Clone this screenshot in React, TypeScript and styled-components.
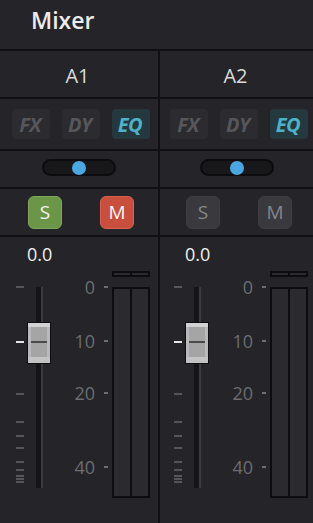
import styled, { createGlobalStyle } from "styled-components";

const GlobalStyle = createGlobalStyle`
  html, body {
    margin: 0;
    padding: 0;
    background: #242429;
  }
  body {
    font-family: "Open Sans", "Noto Sans", sans-serif;
    overflow: hidden;
  }
`;

const LINE = "#101013";

const Panel = styled.div`
  width: 313px;
  height: 523px;
  background: #242429;
  display: flex;
  flex-direction: column;
  overflow: hidden;
`;

const Header = styled.header`
  height: 49px;
  flex-shrink: 0;
  padding-left: 31px;
  border-bottom: 2px solid ${LINE};
`;

const Title = styled.h1`
  margin: 0;
  font-size: 23px;
  font-weight: 600;
  line-height: 40px;
  color: #ececec;
`;

const Channels = styled.div`
  flex: 1;
  min-height: 0;
  display: grid;
  grid-template-columns: 158px 158px;
`;

const Channel = styled.section<{ $divider?: boolean }>`
  display: flex;
  flex-direction: column;
  box-shadow: ${(p) => (p.$divider ? `inset 2px 0 0 ${LINE}` : "none")};
`;

const Row = styled.div`
  flex-shrink: 0;
  display: flex;
  align-items: center;
  border-bottom: 2px solid ${LINE};
  box-sizing: content-box;
`;

const NameRow = styled(Row)`
  height: 44px;
  padding: 2px 3px 0 0;
  justify-content: center;
  font-size: 20px;
  color: #dadada;
`;

const TabRow = styled(Row)`
  height: 50px;
  padding-left: 12px;
  gap: 12px;
`;

const Tab = styled.button<{ $active?: boolean }>`
  width: 38px;
  height: 30px;
  padding: 0 2px 0 0;
  border: none;
  border-radius: 4px;
  font-family: inherit;
  font-size: 20px;
  font-weight: 700;
  font-style: italic;
  letter-spacing: -0.5px;
  background: ${(p) => (p.$active ? "#25383e" : "#2b2b30")};
  color: ${(p) => (p.$active ? "#4db2c7" : "#56565b")};
`;

const PanRow = styled(Row)`
  height: 28px;
  padding: 8px 0 0 42px;
  align-items: flex-start;
`;

const PanTrack = styled.div`
  width: 74px;
  height: 17px;
  box-sizing: border-box;
  border: 2px solid #0c0c0e;
  border-radius: 9px;
  background: #18181b;
  display: flex;
  align-items: center;
  justify-content: center;
`;

const PanKnob = styled.div`
  width: 14px;
  height: 14px;
  border-radius: 50%;
  background: #4aa7e2;
`;

const SoloRow = styled(Row)`
  height: 46px;
  padding-left: 28px;
  gap: 38px;
`;

const StateButton = styled.button<{ $tone: "solo" | "mute" | "off" }>`
  width: 34px;
  height: 33px;
  padding: 0;
  border-radius: 6px;
  font-family: inherit;
  font-size: 19px;
  border: 1px solid
    ${(p) => (p.$tone === "solo" ? "#7ea65c" : p.$tone === "mute" ? "#d96352" : "#3d3d42")};
  background: ${(p) => (p.$tone === "solo" ? "#6b9547" : p.$tone === "mute" ? "#c84f3e" : "#39393e")};
  color: ${(p) => (p.$tone === "off" ? "#86868b" : "#f4f4f4")};
`;

const FaderSection = styled.div`
  flex: 1;
  display: flex;
  align-items: flex-start;
  padding-left: 16px;
`;

const Strip = styled.div`
  width: 35px;
  display: flex;
  flex-direction: column;
`;

const Value = styled.div`
  width: 24px;
  height: 50px;
  margin-left: 11px;
  box-sizing: border-box;
  padding-top: 6px;
  font-size: 18px;
  line-height: 23px;
  text-align: center;
  color: #f0f0f0;
`;

const Rail = styled.div`
  height: 201px;
  display: flex;
`;

const Ticks = styled.div`
  position: relative;
  width: 8px;
`;

const Tick = styled.span<{ $y: number; $marker?: boolean }>`
  position: absolute;
  left: 0;
  top: ${(p) => p.$y - 1}px;
  width: 8px;
  height: 2px;
  background: ${(p) => (p.$marker ? "#e6e6e6" : "#55555a")};
`;

const Track = styled.div`
  position: relative;
  width: 7px;
  height: 201px;
  margin-left: 12px;
  background: linear-gradient(to right, #151517 0 5px, #3a3a3f 5px 7px);
`;

const Knob = styled.div`
  position: absolute;
  left: -9px;
  top: 35px;
  width: 24px;
  height: 42px;
  box-sizing: border-box;
  border: 1.5px solid #0e0e10;
  background:
    linear-gradient(to bottom, #d2d2d2 0 4px, transparent 4px calc(100% - 6px), #c3c3c3 calc(100% - 6px)),
    linear-gradient(to right, #b9b9b9 0 3px, #a5a5a5 3px calc(100% - 3px), #b9b9b9 calc(100% - 3px));

  &::after {
    content: "";
    position: absolute;
    left: 3px;
    right: 3px;
    top: 18px;
    height: 2px;
    background: #4a4a4c;
  }
`;

const Scale = styled.div`
  position: relative;
  width: 61px;
  height: 201px;
  margin-top: 50px;
`;

const Mark = styled.div<{ $y: number }>`
  position: absolute;
  right: 4px;
  top: ${(p) => p.$y - 11}px;
  display: flex;
  align-items: center;
  gap: 9px;
`;

const MarkLabel = styled.span`
  font-size: 18px;
  line-height: 22px;
  color: #6c6c71;
`;

const MarkDash = styled.span`
  width: 4px;
  height: 2px;
  background: #6c6c71;
`;

const Meter = styled.div`
  width: 38px;
  margin-top: 34px;
  display: flex;
  flex-direction: column;
  gap: 10px;
`;

const MeterBox = styled.div<{ $h: number }>`
  height: ${(p) => p.$h}px;
  box-sizing: border-box;
  padding: 2px;
  display: grid;
  grid-template-columns: 1fr 1fr;
  gap: 2px;
  background: #0d0d0f;
`;

const MeterCell = styled.div`
  background: #2a2a2f;
`;

const TICKS = [0, 107, 135, 149, 161, 175, 183, 189, 192, 195];
const MARKS = [
  { label: "0", y: 0 },
  { label: "10", y: 54 },
  { label: "20", y: 106 },
  { label: "40", y: 180 },
];

type ChannelProps = {
  name: string;
  active: boolean;
  divider?: boolean;
};

function ChannelStrip({ name, active, divider }: ChannelProps) {
  return (
    <Channel $divider={divider}>
      <NameRow>{name}</NameRow>
      <TabRow>
        <Tab>FX</Tab>
        <Tab>DY</Tab>
        <Tab $active>EQ</Tab>
      </TabRow>
      <PanRow>
        <PanTrack>
          <PanKnob />
        </PanTrack>
      </PanRow>
      <SoloRow>
        <StateButton $tone={active ? "solo" : "off"}>S</StateButton>
        <StateButton $tone={active ? "mute" : "off"}>M</StateButton>
      </SoloRow>
      <FaderSection>
        <Strip>
          <Value>0.0</Value>
          <Rail>
            <Ticks>
              {TICKS.map((y) => (
                <Tick key={y} $y={y} />
              ))}
              <Tick $y={55} $marker />
            </Ticks>
            <Track>
              <Knob />
            </Track>
          </Rail>
        </Strip>
        <Scale>
          {MARKS.map((m) => (
            <Mark key={m.label} $y={m.y}>
              <MarkLabel>{m.label}</MarkLabel>
              <MarkDash />
            </Mark>
          ))}
        </Scale>
        <Meter>
          <MeterBox $h={6}>
            <MeterCell />
            <MeterCell />
          </MeterBox>
          <MeterBox $h={211}>
            <MeterCell />
            <MeterCell />
          </MeterBox>
        </Meter>
      </FaderSection>
    </Channel>
  );
}

export default function App() {
  return (
    <>
      <GlobalStyle />
      <Panel>
        <Header>
          <Title>Mixer</Title>
        </Header>
        <Channels>
          <ChannelStrip name="A1" active />
          <ChannelStrip name="A2" active={false} divider />
        </Channels>
      </Panel>
    </>
  );
}
